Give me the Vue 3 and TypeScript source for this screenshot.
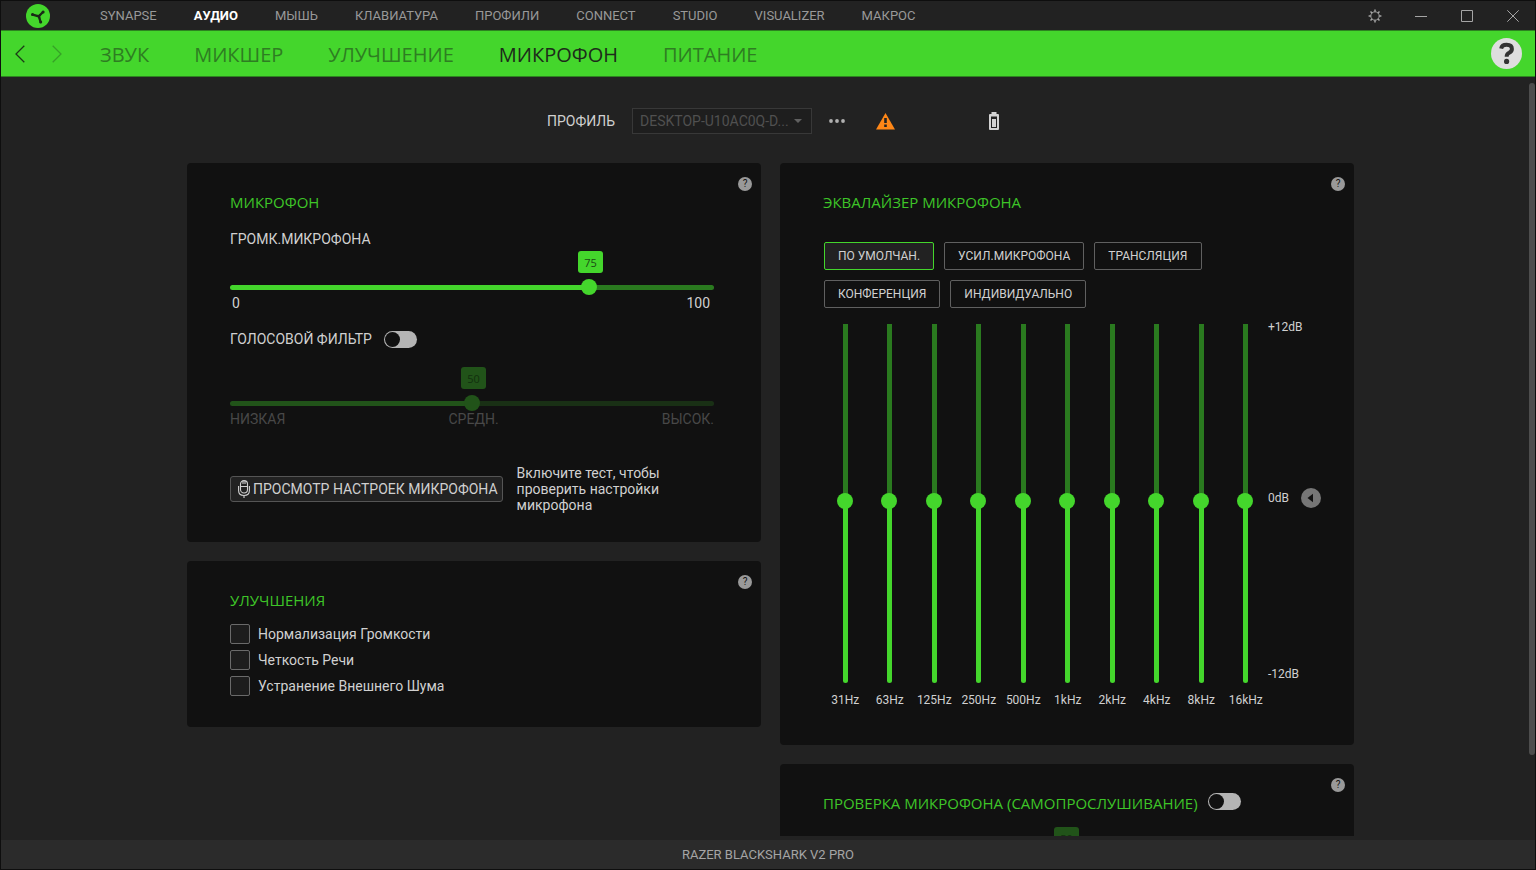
<script setup lang="ts">
import { computed, ref } from 'vue'

const modules = ['SYNAPSE', 'АУДИО', 'МЫШЬ', 'КЛАВИАТУРА', 'ПРОФИЛИ', 'CONNECT', 'STUDIO', 'VISUALIZER', 'МАКРОС']
const activeModule = ref('АУДИО')

const tabs = ['ЗВУК', 'МИКШЕР', 'УЛУЧШЕНИЕ', 'МИКРОФОН', 'ПИТАНИЕ']
const activeTab = ref('МИКРОФОН')

const volume = ref(75)
const filterOn = ref(false)
const filterLevel = ref(50)
const sidetoneOn = ref(false)
const sidetoneLevel = ref(50)

const enhancements = ref([
  { id: 'norm', label: 'Нормализация Громкости', on: false },
  { id: 'clarity', label: 'Четкость Речи', on: false },
  { id: 'noise', label: 'Устранение Внешнего Шума', on: false },
])

const presets = ['ПО УМОЛЧАН.', 'УСИЛ.МИКРОФОНА', 'ТРАНСЛЯЦИЯ', 'КОНФЕРЕНЦИЯ', 'ИНДИВИДУАЛЬНО']
const activePreset = ref('ПО УМОЛЧАН.')

const bands = ref(
  ['31Hz', '63Hz', '125Hz', '250Hz', '500Hz', '1kHz', '2kHz', '4kHz', '8kHz', '16kHz'].map((label) => ({ label, gain: 0 })),
)

const position = (value: number) => ({ '--pos': String(value / 100) })
const gainPosition = (gain: number) => ({ '--pos': String((gain + 12) / 24) })
const volumeStyle = computed(() => position(volume.value))
const filterStyle = computed(() => position(filterLevel.value))
const sidetoneStyle = computed(() => position(sidetoneLevel.value))
</script>

<template>
  <div class="window">
    <header class="titlebar">
      <svg class="logo" viewBox="0 0 24 24" aria-hidden="true">
        <circle cx="12" cy="12" r="12" fill="#44d62c" />
        <g stroke="#1a2a17" fill="none" stroke-linecap="round">
          <path d="M12.800 12.300 6.600 10.600M12.800 12.300 17 8M12.800 12.300 14.600 18" stroke-width="2.300" />
          <path d="M10 11.600Q13 11.800 14.600 10.200Q13.400 12.400 13.800 15Q12.600 12.800 10 11.600" stroke-width="1" fill="#1a2a17" />
        </g>
        <g fill="#1a2a17">
          <circle cx="6.500" cy="10.500" r="1.500" />
          <circle cx="17.100" cy="7.900" r="1.500" />
          <circle cx="14.700" cy="18" r="1.500" />
        </g>
      </svg>
      <nav class="modules" aria-label="Модули">
        <a v-for="m in modules" :key="m" href="#" :class="{ active: m === activeModule }" @click.prevent="activeModule = m">{{ m }}</a>
      </nav>
      <div class="controls">
        <button type="button" aria-label="Настройки">
          <svg width="14" height="14" viewBox="0 0 14 14" fill="none" stroke="#a5a5a5">
            <circle cx="7" cy="7" r="4.2" />
            <path d="M7 .6v2.2M7 11.2v2.2M.6 7h2.2M11.2 7h2.2M2.5 2.5 4 4M10 10l1.5 1.5M2.5 11.5 4 10M10 4l1.5-1.5" stroke-width="1.5" />
          </svg>
        </button>
        <button type="button" aria-label="Свернуть">
          <svg width="12" height="12" viewBox="0 0 12 12" stroke="#a5a5a5"><path d="M0 6.5h12" /></svg>
        </button>
        <button type="button" aria-label="Развернуть">
          <svg width="12" height="12" viewBox="0 0 12 12" fill="none" stroke="#a5a5a5"><path d="M.5.5h11v11H.5z" /></svg>
        </button>
        <button type="button" aria-label="Закрыть">
          <svg width="12" height="12" viewBox="0 0 12 12" stroke="#a5a5a5"><path d="M.3.3l11.4 11.4M11.7.3.3 11.7" /></svg>
        </button>
      </div>
    </header>

    <div class="tabbar">
      <div class="history">
        <button type="button" aria-label="Назад">
          <svg width="10" height="18" viewBox="0 0 10 18" fill="none" stroke="#1c3a17" stroke-width="1.3"><path d="M9.3.8 1 9l8.3 8.2" /></svg>
        </button>
        <button type="button" aria-label="Вперёд" disabled>
          <svg width="10" height="18" viewBox="0 0 10 18" fill="none" stroke="#36a127" stroke-width="1.3"><path d="M.7.8 9 9 .7 17.2" /></svg>
        </button>
      </div>
      <nav class="tabs" aria-label="Разделы">
        <a v-for="t in tabs" :key="t" href="#" :class="{ active: t === activeTab }" @click.prevent="activeTab = t">{{ t }}</a>
      </nav>
      <button type="button" class="help-main" aria-label="Справка">
        <svg width="31" height="31" viewBox="0 0 31 31">
          <circle cx="15.5" cy="15.5" r="15.5" fill="#dedede" />
          <path d="M10.2 10.6Q10.8 6.8 15.6 6.8 20.9 6.8 20.9 10.9 20.9 13.2 18.2 14.7 15.7 16 15.7 18.2V18.8" fill="none" stroke="#333" stroke-width="4" />
          <circle cx="15.6" cy="23.4" r="2.6" fill="#333" />
        </svg>
      </button>
    </div>

    <main class="content">
      <div class="profile">
        <label for="profile">ПРОФИЛЬ</label>
        <div class="select">
          <select id="profile" disabled>
            <option>DESKTOP-U10AC0Q-D...</option>
          </select>
          <svg width="8" height="4" viewBox="0 0 8 4" fill="#606060" aria-hidden="true"><path d="M0 0h8L4 4z" /></svg>
        </div>
        <button type="button" class="more" aria-label="Ещё">
          <svg width="16" height="4" viewBox="0 0 16 4" fill="#b0b0b0"><circle cx="2" cy="2" r="1.9" /><circle cx="8" cy="2" r="1.9" /><circle cx="14" cy="2" r="1.9" /></svg>
        </button>
        <svg class="warning" width="19" height="17" viewBox="0 0 19 17" aria-hidden="true">
          <path d="M9.5 0 19 16.5H0z" fill="#ff8717" />
          <path d="M8.2 5h2.6v5H8.2zM8.2 11.4h2.6V14H8.2z" fill="#222" />
        </svg>
        <svg class="battery" width="10" height="18" viewBox="0 0 10 18" aria-hidden="true">
          <path d="M2.5 0h5v2H9q1 0 1 1v14q0 1-1 1H1q-1 0-1-1V3q0-1 1-1h1.500z" fill="#d2d2d2" />
          <path d="M2 4.500h6V16H2z" fill="#222" />
          <path d="M3 7h4v8H3z" fill="#d2d2d2" />
        </svg>
      </div>

      <div class="columns">
        <div class="column">
          <section class="card mic">
            <button type="button" class="help" aria-label="Справка: микрофон">?</button>
            <h2>МИКРОФОН</h2>
            <label class="caption" for="volume">ГРОМК.МИКРОФОНА</label>
            <div class="slider" :style="volumeStyle">
              <output class="bubble" for="volume">{{ volume }}</output>
              <input id="volume" v-model.number="volume" type="range" min="0" max="100" />
              <div class="scale ends"><span>0</span><span>100</span></div>
            </div>
            <div class="switch-row">
              <label for="filter">ГОЛОСОВОЙ ФИЛЬТР</label>
              <input id="filter" v-model="filterOn" class="switch" type="checkbox" />
            </div>
            <div class="slider" :class="{ off: !filterOn }" :style="filterStyle">
              <output class="bubble" for="filter-level">{{ filterLevel }}</output>
              <input id="filter-level" v-model.number="filterLevel" type="range" min="0" max="100" aria-label="Уровень фильтра" :disabled="!filterOn" />
              <div class="scale"><span>НИЗКАЯ</span><span>СРЕДН.</span><span>ВЫСОК.</span></div>
            </div>
            <div class="test">
              <button type="button" class="test-button">
                <svg width="12" height="18" viewBox="0 0 12 18" fill="none" stroke="#d0d0d0" stroke-width="1.100">
                  <rect x="2.500" y=".6" width="7" height="12.400" rx="3.500" />
                  <path d="M2.500 6.500h7M5 1v3M7 1v3M.6 6v4.500q0 5 5.400 5t5.400-5V6M6 15.500V18" />
                </svg>
                ПРОСМОТР НАСТРОЕК МИКРОФОНА
              </button>
              <p>Включите тест, чтобы проверить настройки микрофона</p>
            </div>
          </section>

          <section class="card enhance">
            <button type="button" class="help" aria-label="Справка: улучшения">?</button>
            <h2>УЛУЧШЕНИЯ</h2>
            <div v-for="e in enhancements" :key="e.id" class="check">
              <input :id="e.id" v-model="e.on" type="checkbox" />
              <label :for="e.id">{{ e.label }}</label>
            </div>
          </section>
        </div>

        <div class="column">
          <section class="card equalizer">
            <button type="button" class="help" aria-label="Справка: эквалайзер">?</button>
            <h2>ЭКВАЛАЙЗЕР МИКРОФОНА</h2>
            <div class="presets">
              <button v-for="p in presets" :key="p" type="button" :class="{ active: p === activePreset }" @click="activePreset = p">{{ p }}</button>
            </div>
            <div class="eq">
              <div class="bands">
                <div v-for="(b, i) in bands" :key="b.label" class="band">
                  <div class="rail" :style="gainPosition(b.gain)">
                    <input :id="`band-${i}`" v-model.number="b.gain" type="range" min="-12" max="12" />
                  </div>
                  <label :for="`band-${i}`">{{ b.label }}</label>
                </div>
              </div>
              <div class="db">
                <span>+12dB</span>
                <div class="zero">
                  <span>0dB</span>
                  <button type="button" aria-label="Сбросить">
                    <svg width="20" height="20" viewBox="0 0 20 20"><circle cx="10" cy="10" r="10" fill="#767676" /><path d="M12 5.800v8.400L6.500 10z" fill="#111" /></svg>
                  </button>
                </div>
                <span>-12dB</span>
              </div>
            </div>
          </section>

          <section class="card sidetone">
            <button type="button" class="help" aria-label="Справка: самопрослушивание">?</button>
            <div class="switch-row">
              <h2><label for="sidetone">ПРОВЕРКА МИКРОФОНА (САМОПРОСЛУШИВАНИЕ)</label></h2>
              <input id="sidetone" v-model="sidetoneOn" class="switch" type="checkbox" />
            </div>
            <div class="slider" :class="{ off: !sidetoneOn }" :style="sidetoneStyle">
              <output class="bubble" for="sidetone-level">{{ sidetoneLevel }}</output>
              <input id="sidetone-level" v-model.number="sidetoneLevel" type="range" min="0" max="100" aria-label="Уровень самопрослушивания" :disabled="!sidetoneOn" />
            </div>
          </section>
        </div>
      </div>
      <div class="scroll-thumb"></div>
    </main>

    <footer class="status">RAZER BLACKSHARK V2 PRO</footer>
  </div>
</template>

<style>
body {
  background: #222;
}
</style>

<style scoped>
* {
  box-sizing: border-box;
}
.window {
  height: 100vh;
  display: flex;
  flex-direction: column;
  border: 1px solid #0e0e0e;
  background: #222;
  color: #d0d0d0;
  font: 14px/16px Roboto, 'Noto Sans', sans-serif;
}
button {
  border: 0;
  padding: 0;
  background: none;
  color: inherit;
  font: inherit;
  cursor: pointer;
}
svg {
  display: block;
}
a {
  text-decoration: none;
}
h2 {
  margin: 0;
  color: #3ec528;
  font: 400 15px/20px 'Open Sans', 'Noto Sans', sans-serif;
}
input {
  margin: 0;
}

.titlebar {
  flex: none;
  display: flex;
  align-items: center;
  height: 29px;
  padding-left: 25px;
}
.logo {
  width: 24px;
  height: 24px;
}
.modules {
  display: flex;
  gap: 37px;
  margin-left: 50px;
  font-size: 13px;
}
.modules a {
  color: #999;
}
.modules a.active {
  color: #fff;
  font-weight: 700;
}
.controls {
  display: flex;
  margin-left: auto;
  margin-right: -1px;
}
.controls button {
  width: 46px;
  height: 28px;
  display: grid;
  place-items: center;
}

.tabbar {
  flex: none;
  display: flex;
  align-items: center;
  height: 47px;
  padding: 0 13px 0 14px;
  background: #44d62c;
  border: solid #2d8320;
  border-width: 1px 0;
}
.history {
  display: flex;
  gap: 27px;
  width: 85px;
}
.tabs {
  display: flex;
  gap: 45px;
  padding-top: 2px;
  font: 400 20px/28px 'Open Sans', 'Noto Sans', sans-serif;
}
.tabs a {
  color: #2e7d22;
}
.tabs a.active {
  color: #1d2b1a;
}
.help-main {
  margin-left: auto;
}

.content {
  position: relative;
  flex: 1;
  min-height: 0;
  overflow: hidden;
  margin-bottom: 4px;
  padding: 31px 0 0 5px;
}
.profile {
  display: flex;
  align-items: center;
  justify-content: center;
  height: 26px;
  margin-bottom: 29px;
  padding-left: 5px;
}
.select {
  position: relative;
  width: 180px;
  margin: 0 17px;
}
.select select {
  appearance: none;
  width: 100%;
  height: 26px;
  padding: 0 20px 0 7px;
  border: 1px solid #383838;
  border-radius: 0;
  background: #1e1e1e;
  color: #505050;
  opacity: 1;
  font: inherit;
}
.select svg {
  position: absolute;
  right: 10px;
  top: 11px;
}
.warning {
  margin-left: 31px;
}
.battery {
  margin-left: 94px;
}

.columns {
  display: grid;
  grid-template-columns: repeat(2, minmax(0, 1fr));
  align-items: start;
  gap: 19px;
  max-width: 1167px;
  margin: 0 auto;
}
.column {
  display: grid;
  gap: 19px;
}
.card {
  position: relative;
  padding: 29px 47px 29px 43px;
  border-radius: 4px;
  background: #111;
}
.help {
  position: absolute;
  top: 14px;
  right: 9px;
  width: 14px;
  height: 14px;
  border-radius: 50%;
  background: #999;
  color: #111;
  font-size: 10px;
  line-height: 14px;
}

.caption {
  display: block;
  margin-top: 19px;
}
.slider {
  position: relative;
  padding-top: 32px;
}
.bubble {
  position: absolute;
  top: 4px;
  left: calc(8px + var(--pos) * (100% - 16px));
  width: 25px;
  height: 22px;
  margin-left: -11px;
  border-radius: 3px;
  background: #44d62c;
  color: #1b4a14;
  font: 11px/23px 'Open Sans', 'Noto Sans', sans-serif;
  text-align: center;
}
input[type='range'] {
  appearance: none;
  display: block;
  background: none;
}
.slider input {
  width: 100%;
  height: 16px;
}
.slider input::-webkit-slider-runnable-track {
  height: 5px;
  border-radius: 3px;
  background: linear-gradient(90deg, #44d62c calc(var(--pos) * 100%), #2a7a1f 0);
}
input[type='range']::-webkit-slider-thumb {
  appearance: none;
  width: 16px;
  height: 16px;
  border-radius: 50%;
  background: #44d62c;
}
.slider input::-webkit-slider-thumb {
  margin-top: -6px;
}
.scale {
  display: flex;
  justify-content: space-between;
}
.scale.ends {
  padding: 0 4px 0 2px;
}
.slider.off .bubble {
  background: #215319;
  color: #12300e;
}
.slider.off input::-webkit-slider-runnable-track {
  background: linear-gradient(90deg, #215319 calc(var(--pos) * 100%), #193015 0);
}
.slider.off input::-webkit-slider-thumb {
  background: #215319;
}
.slider.off .scale {
  color: #484848;
}
.switch-row {
  display: flex;
  align-items: flex-start;
  gap: 10px;
}
.mic .switch-row {
  gap: 12px;
  margin-top: 20px;
}
.switch {
  appearance: none;
  width: 33px;
  height: 17px;
  border-radius: 9px;
  background: #b4b4b4;
  cursor: pointer;
}
.switch::before {
  content: '';
  display: block;
  width: 15px;
  height: 15px;
  margin: 1px;
  border-radius: 50%;
  background: #111;
}
.switch:checked {
  background: #44d62c;
}
.switch:checked::before {
  margin-left: 17px;
}
.mic .slider.off {
  margin-top: 15px;
}
.test {
  display: flex;
  align-items: center;
  gap: 14px;
  margin-top: 38px;
}
.test p {
  width: 160px;
  margin: 0;
}
.test-button {
  display: flex;
  align-items: center;
  gap: 3px;
  height: 26px;
  padding: 0 4px 0 7px;
  border: 1px solid #555;
  border-radius: 3px;
  background: #222;
  white-space: nowrap;
}

.enhance {
  padding-bottom: 31px;
}
.check {
  display: flex;
  align-items: center;
  gap: 8px;
  height: 20px;
  margin-top: 6px;
}
.enhance h2 {
  margin-bottom: 14px;
}
.check input {
  appearance: none;
  width: 20px;
  height: 20px;
  border: 1px solid #6a6a6a;
  border-radius: 2px;
  background: #1d1d1d;
}
.check input:checked {
  background: #44d62c;
}

.equalizer {
  padding-right: 30px;
  padding-bottom: 37px;
}
.presets {
  display: flex;
  flex-wrap: wrap;
  gap: 10px;
  max-width: 400px;
  margin: 30px 0 0 1px;
}
.presets button {
  height: 28px;
  padding: 0 13px;
  border: 1px solid #606060;
  border-radius: 2px;
  font-size: 12px;
}
.presets button.active {
  border-color: #44d62c;
  background: #222;
}
.eq {
  display: flex;
  margin-top: 16px;
  font-size: 12px;
}
.bands {
  display: grid;
  grid-template-columns: repeat(10, 1fr);
  width: 445px;
}
.band {
  display: grid;
  justify-items: center;
  gap: 9px;
}
.rail {
  display: flex;
  align-items: flex-end;
  height: 359px;
  padding: 0 1px;
  overflow: hidden;
}
.rail input {
  writing-mode: vertical-lr;
  direction: rtl;
  width: 16px;
  height: 364px;
}
.rail input::-webkit-slider-runnable-track {
  width: 5px;
  border-radius: 3px;
  background: linear-gradient(0deg, #44d62c calc(var(--pos) * 100%), #2a7a1f 0);
}
.rail input::-webkit-slider-thumb {
  margin-left: -6px;
}
.db {
  display: flex;
  flex-direction: column;
  justify-content: space-between;
  height: 363px;
  margin-top: -5px;
}
.zero {
  display: flex;
  align-items: center;
  gap: 12px;
  margin-bottom: 5px;
}

.sidetone {
  height: 180px;
}
.sidetone .slider {
  margin-top: 10px;
}

.scroll-thumb {
  position: absolute;
  top: 6px;
  right: 0;
  width: 6px;
  height: 672px;
  border-radius: 3px;
  background: #4d4d4d;
}
.status {
  flex: none;
  height: 29px;
  background: #2b2b2b;
  color: #a5a5a5;
  font-size: 13px;
  line-height: 30px;
  text-align: center;
}
</style>
